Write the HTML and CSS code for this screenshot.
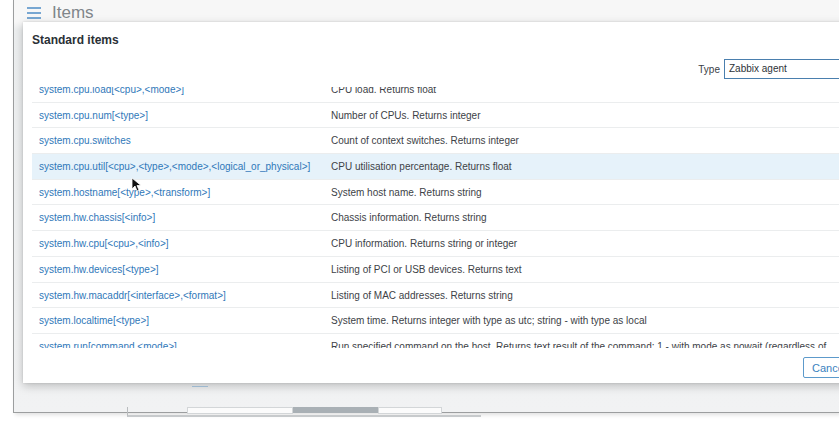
FILE: index.html
```html
<!DOCTYPE html>
<html>
<head>
<meta charset="utf-8">
<link rel="stylesheet" href="styles.css">
</head>
<body>
<div class="window">
  <header class="page-head">
    <svg class="burger" width="14" height="12" viewBox="0 0 14 12"><path d="M0 1h14M0 6h14M0 11h14" stroke="#4f8dc6" stroke-width="1.6"/></svg>
    <h1 class="page-title">Items</h1>
  </header>
</div>

<div class="scrollbar"><span class="sb-track"></span><span class="sb-thumb"></span><span class="sb-track short"></span></div>

<div class="modal">
  <div class="modal-title">Standard items</div>
  <div class="filter">
    <label class="filter-label">Type</label>
    <div class="select">Zabbix agent</div>
  </div>
  <div class="table-wrap">
    <table class="items">
      <tbody>
        <tr><td class="key">system.cpu.load[&lt;cpu&gt;,&lt;mode&gt;]</td><td class="desc">CPU load. Returns float</td></tr>
        <tr><td class="key">system.cpu.num[&lt;type&gt;]</td><td class="desc">Number of CPUs. Returns integer</td></tr>
        <tr><td class="key">system.cpu.switches</td><td class="desc">Count of context switches. Returns integer</td></tr>
        <tr class="hover"><td class="key">system.cpu.util[&lt;cpu&gt;,&lt;type&gt;,&lt;mode&gt;,&lt;logical_or_physical&gt;]</td><td class="desc">CPU utilisation percentage. Returns float</td></tr>
        <tr><td class="key">system.hostname[&lt;type&gt;,&lt;transform&gt;]</td><td class="desc">System host name. Returns string</td></tr>
        <tr><td class="key">system.hw.chassis[&lt;info&gt;]</td><td class="desc">Chassis information. Returns string</td></tr>
        <tr><td class="key">system.hw.cpu[&lt;cpu&gt;,&lt;info&gt;]</td><td class="desc">CPU information. Returns string or integer</td></tr>
        <tr><td class="key">system.hw.devices[&lt;type&gt;]</td><td class="desc">Listing of PCI or USB devices. Returns text</td></tr>
        <tr><td class="key">system.hw.macaddr[&lt;interface&gt;,&lt;format&gt;]</td><td class="desc">Listing of MAC addresses. Returns string</td></tr>
        <tr><td class="key">system.localtime[&lt;type&gt;]</td><td class="desc">System time. Returns integer with type as utc; string - with type as local</td></tr>
        <tr><td class="key">system.run[command,&lt;mode&gt;]</td><td class="desc">Run specified command on the host. Returns text result of the command; 1 - with mode as nowait (regardless of command result)</td></tr>
      </tbody>
    </table>
  </div>
  <div class="modal-foot">
    <button class="btn">Cancel</button>
  </div>
</div>

<svg class="cursor" width="10" height="15" viewBox="0 0 10 15"><path d="M1 1v11l3-3 2 5 2-1-2-4.5h4z" fill="#111" stroke="#fff" stroke-width="0.8"/></svg>
<span class="blue-tick"></span>
</body>
</html>
```

FILE: styles.css
```css
html, body {
  margin: 0;
  padding: 0;
  background: #ffffff;
  width: 839px;
  height: 426px;
  overflow: hidden;
  font-family: "Liberation Sans", Arial, sans-serif;
}

.window {
  margin-left: 13px;
  height: 412px;
  border-left: 1px solid #9c9e9f;
  border-bottom: 1px solid #9c9e9f;
  background: linear-gradient(#f7f7f7 0, #f7f7f7 22px, #eceeef 30px, #f1f2f3 100%);
  box-shadow: 2px 2px 4px rgba(0, 0, 0, 0.12);
}

.page-head {
  display: flex;
  align-items: center;
  gap: 11px;
  padding: 1px 0 0 13px;
  height: 24px;
}

.burger {
  display: block;
  margin-top: -1px;
}

.page-title {
  margin: 0;
  font-size: 17px;
  font-weight: normal;
  color: #80868b;
  line-height: 22px;
}

.modal {
  position: absolute;
  left: 23px;
  top: 22px;
  width: 830px;
  height: 361px;
  background: #ffffff;
  box-shadow: 0 3px 9px rgba(0, 0, 0, 0.22), 0 0 2px rgba(0, 0, 0, 0.12);
  display: flex;
  flex-direction: column;
}

.modal-title {
  padding: 11px 9px 0;
  font-size: 12px;
  line-height: 14px;
  font-weight: bold;
  color: #2a3036;
}

.filter {
  display: flex;
  justify-content: flex-end;
  align-items: center;
  gap: 4px;
  margin-top: 12px;
  padding-right: 5px;
}

.filter-label {
  font-size: 10px;
  color: #3a4046;
}

.select {
  box-sizing: border-box;
  width: 124px;
  height: 20px;
  border: 1px solid #4a7fae;
  font-size: 10px;
  line-height: 18px;
  padding-left: 4px;
  color: #2d3338;
}

.table-wrap {
  margin-top: 8px;
  height: 261px;
  overflow: hidden;
  padding-left: 9px;
}

.items {
  width: 100%;
  border-collapse: collapse;
  table-layout: fixed;
  margin-top: -10px;
  font-size: 10px;
}

.items td {
  vertical-align: top;
  padding: 6px 7px 4.7px;
  line-height: 14px;
  border-bottom: 1px solid #ebedee;
}

.items td.key {
  width: 278px;
  white-space: nowrap;
  color: #2f78b9;
}

.items td.desc {
  color: #3d4247;
  padding-right: 16px;
}

.items tr.hover td {
  background: #e6f2fa;
}

.modal-foot {
  display: flex;
  justify-content: flex-start;
  margin-top: 9px;
  padding-left: 780px;
}

.btn {
  box-sizing: border-box;
  flex: none;
  width: 56px;
  height: 21px;
  border: 1px solid #5d9acb;
  border-radius: 2px;
  background: #ffffff;
  color: #3b82c0;
  font-family: "Liberation Sans", Arial, sans-serif;
  font-size: 11px;
  text-align: left;
  padding: 0 0 0 8px;
  white-space: nowrap;
}

.scrollbar {
  position: absolute;
  left: 127px;
  top: 407px;
  width: 354px;
  height: 10px;
  border-left: 1px solid #b9bcbe;
  border-bottom: 2px solid #c7cacc;
  display: flex;
  align-items: flex-start;
  padding-left: 59px;
  box-sizing: border-box;
}

.sb-track {
  width: 104px;
  height: 5px;
  border: 1px solid #d3d6d8;
  background: #fbfbfb;
}

.sb-thumb {
  width: 85px;
  height: 6px;
  background: #a9b0b5;
}

.sb-track.short {
  width: 62px;
}

.cursor {
  position: absolute;
  left: 131px;
  top: 177px;
}

.blue-tick {
  position: absolute;
  left: 192px;
  top: 386px;
  width: 16px;
  height: 1px;
  background: #9db8cf;
}
```
